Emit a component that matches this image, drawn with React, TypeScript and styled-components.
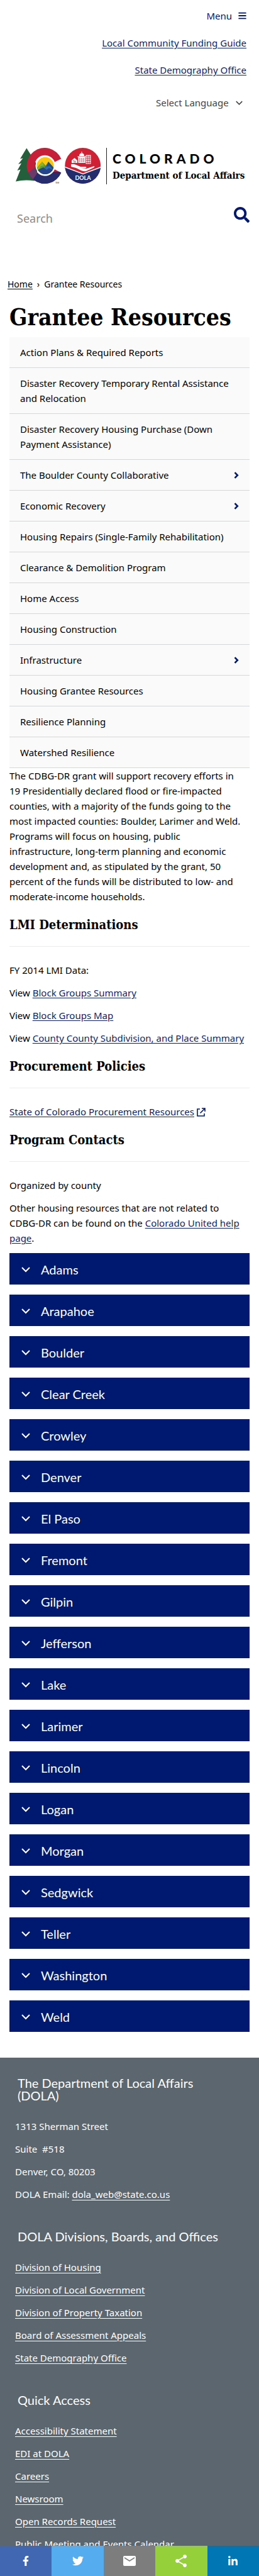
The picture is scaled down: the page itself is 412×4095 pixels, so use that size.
import React from 'react';
import styled, { createGlobalStyle } from 'styled-components';
import { FaBars, FaSearch, FaFacebookF, FaTwitter, FaLinkedinIn } from 'react-icons/fa';
import { MdEmail, MdShare } from 'react-icons/md';

const navy = '#001970';
const bodyFont = '"Trebuchet MS", "Noto Sans", sans-serif';
const slabFont = '"Museo Slab", "DejaVu Serif Condensed", "DejaVu Serif", serif';
const museoFont = '"Museo Sans", Lato, sans-serif';

const GlobalStyle = createGlobalStyle`
  *, *::before, *::after { box-sizing: border-box; }
  body {
    margin: 0;
    background: #fff;
    color: #000;
    font: 400 15px/24px ${bodyFont};
  }
`;

const Header = styled.header`
  display: flex;
  flex-direction: column;
`;

const Utility = styled.div`
  display: flex;
  flex-direction: column;
  align-items: flex-end;
  gap: 19px;
  padding: 13px 20px 0;
`;

const MenuButton = styled.button`
  display: flex;
  align-items: center;
  gap: 10px;
  padding: 0;
  border: 0;
  background: none;
  color: ${navy};
  font: inherit;
  svg { width: 13px; height: 14px; }
`;

const TextLink = styled.a`
  color: #0f1f6b;
  text-decoration: underline;
  text-underline-offset: 2px;
`;

const LanguagePicker = styled.label`
  display: grid;
  align-items: center;
  margin-top: 9px;
  color: #444;
  > * { grid-area: 1 / 1; }
  > svg { justify-self: end; margin-right: 6px; pointer-events: none; }
`;

const Select = styled.select`
  appearance: none;
  height: 24px;
  padding: 0 28px 0 0;
  border: 0;
  background: transparent;
  color: inherit;
  font: inherit;
`;

const Brand = styled.a`
  display: flex;
  align-items: center;
  gap: 9px;
  margin: 60px 0 0 25px;
  color: #000;
  text-decoration: none;
`;

const BrandText = styled.span`
  display: flex;
  flex-direction: column;
  gap: 4px;
  padding-left: 9px;
  border-left: 1px solid #222;
  white-space: nowrap;
`;

const StateName = styled.span`
  padding-top: 4px;
  font: 900 21px/26px ${museoFont};
  letter-spacing: 6px;
`;

const AgencyName = styled.span`
  padding-bottom: 4px;
  font: 700 15px/20px ${slabFont};
`;

const SearchForm = styled.form`
  display: flex;
  justify-content: space-between;
  align-items: center;
  padding: 34px 15px 0 27px;
`;

const SearchInput = styled.input`
  flex: 1;
  min-width: 0;
  height: 40px;
  padding: 0;
  border: 0;
  background: transparent;
  font: 400 18px/24px ${bodyFont};
  &::placeholder { color: #8c8c8c; opacity: 1; }
`;

const IconButton = styled.button`
  display: flex;
  padding: 0 0 12px;
  border: 0;
  background: none;
  color: ${navy};
`;

const Breadcrumb = styled.nav`
  display: flex;
  gap: 7px;
  padding: 73px 12px 0;
  font-size: 14px;
  a { color: #000; text-underline-offset: 2px; }
`;

const Main = styled.main`
  padding: 0 15px;
`;

const PageTitle = styled.h1`
  margin: 16px 0 8px;
  font: 700 37px/48px ${slabFont};
  white-space: nowrap;
`;

const SideNav = styled.nav`
  display: flex;
  flex-direction: column;
  background: #fafafa;
`;

const SideLink = styled.a`
  display: flex;
  justify-content: space-between;
  align-items: center;
  padding: 12px 17px;
  border-bottom: 1px solid #d5d7d9;
  color: #000;
  text-decoration: none;
  svg { flex: none; }
`;

const Paragraph = styled.p<{ $inset?: boolean }>`
  margin: 0 0 12px;
  padding-right: ${p => (p.$inset ? 8 : 0)}px;
`;

const SectionTitle = styled.h2`
  margin: 21px 0 25px;
  padding-bottom: 22px;
  border-bottom: 1px solid #ececec;
  font: 700 20px/24px ${slabFont};
`;

const ExternalIcon = styled.svg`
  margin-left: 4px;
  vertical-align: -2px;
`;

const Accordion = styled.div`
  display: flex;
  flex-direction: column;
  gap: 16px;
  padding-bottom: 41px;
`;

const AccordionButton = styled.button`
  display: flex;
  align-items: center;
  gap: 17px;
  height: 50px;
  padding: 2px 19px 0;
  border: 0;
  background: ${navy};
  color: #fff;
  font: 400 20px/24px ${museoFont};
`;

const Footer = styled.footer`
  display: flex;
  flex-direction: column;
  gap: 45px;
  padding: 30px 24px 39px;
  background: #5c666f;
  color: #fff;
`;

const FooterTitle = styled.h2`
  margin: 0 16px 27px 4px;
  font: 400 20px/20px ${museoFont};
`;

const FooterList = styled.div`
  display: flex;
  flex-direction: column;
  align-items: flex-start;
  gap: 12px;
  a { color: #fff; text-underline-offset: 3px; }
`;

const ShareBar = styled.div`
  position: fixed;
  inset: auto 0 0;
  display: flex;
  height: 48px;
`;

const ShareLink = styled.a<{ $color: string }>`
  flex: 1;
  display: flex;
  justify-content: center;
  align-items: center;
  background: ${p => p.$color};
  color: #fff;
`;

function Logo() {
  return (
    <svg width="135" height="58" viewBox="0 0 135 58" aria-hidden="true">
      <defs>
        <clipPath id="c-shape">
          <path d="M72.3 17.5A28.5 28.5 0 1 0 72.3 39.5L62 34.2A16.5 16.5 0 1 1 62 22.4Z" />
        </clipPath>
        <clipPath id="valley"><circle cx="47" cy="28.3" r="13.6" /></clipPath>
        <clipPath id="seal"><circle cx="106.7" cy="28.5" r="28.4" /></clipPath>
      </defs>
      <path d="M17.3.5 7 17.5l4.5-1L4 26l5-1.5L2.5 36l5-1.5L0 53.5q14-3.5 30-1L36 30Z" fill="#235f3a" />
      <g clipPath="url(#c-shape)">
        <rect x="14" width="62" height="58" fill="#c61f3a" />
        <path d="M14 45 34 29l10 9h32v20H14Z" fill="#262d6e" />
        <path d="M12 46 33 29l4 7-12 18Z" fill="#6c3a68" />
      </g>
      <circle cx="47" cy="28.3" r="15.5" fill="#fff" />
      <g clipPath="url(#valley)">
        <rect x="33" y="14" width="28" height="29" fill="#fdc60b" />
        <path d="M32 34 42 22l9 10-8 12H32Z" fill="#5f9a32" />
        <path d="m42 22 3 6-5 1-4 7-4 0Z" fill="#8db52c" />
        <path d="m42 37 10-15 11 12v10H40Z" fill="#2a6db0" />
        <path d="m52 22-3 8 5-1 5 6 4 0Z" fill="#1e4f88" />
        <path d="m33 36 11-5 5 4 4-3 10 5v8H33Z" fill="#24448c" />
      </g>
      <text x="63" y="57" fontFamily="Lato, sans-serif" fontSize="4" fill="#222">TM</text>
      <g clipPath="url(#seal)">
        <rect x="78" width="58" height="58" fill="#cf2034" />
        <path d="m78 30.5 29 11 29-11V58H78Z" fill="#232c6c" />
        <path d="m78 30.5 29 11 29-11" fill="none" stroke="#fff" strokeWidth="1.6" />
      </g>
      <g fill="#fff">
        <path d="M88 26q4-1 8 1l7 3h8q3 1 0 2.5l-7 .5 8 .2 12-4q3-.2 0 2.3l-12 5.5q-3 1-8-1l-8-4-8-2Z" />
        <path d="m89 20 4.5-4 4.5 4v4h-9ZM99.5 24v-9h11v9ZM98.500 13.5h13v1.5h-13ZM101 13q0-4.5 4-4.5t4 4.5ZM104.5 6h1v3h-1Z" />
        <path d="M111.5 11.5h8v14h-8Z" />
      </g>
      <path d="M91.5 20.5h1.5v3M95 20.5v3M102 16v7M105 16v7M108 16v7M114 12v13M117 12v13M112 14.5h7M112 17.5h7M112 20.5h7M112 23.5h7" stroke="#cf2034" strokeWidth=".9" fill="none" />
      <text x="107" y="51" textAnchor="middle" fontFamily="Lato, sans-serif" fontWeight="700" fontSize="9" fill="#fff">DOLA</text>
    </svg>
  );
}

function Chevron({ width, stroke }: { width: number; stroke: number }) {
  return (
    <svg width={width} height={width} viewBox="0 0 14 14" fill="none" stroke="currentColor" strokeWidth={stroke} aria-hidden="true">
      <path d="m1 4 6 6 6-6" />
    </svg>
  );
}

const pages: { label: string; more?: boolean }[] = [
  { label: 'Action Plans & Required Reports' },
  { label: 'Disaster Recovery Temporary Rental Assistance and Relocation' },
  { label: 'Disaster Recovery Housing Purchase (Down Payment Assistance)' },
  { label: 'The Boulder County Collaborative', more: true },
  { label: 'Economic Recovery', more: true },
  { label: 'Housing Repairs (Single-Family Rehabilitation)' },
  { label: 'Clearance & Demolition Program' },
  { label: 'Home Access' },
  { label: 'Housing Construction' },
  { label: 'Infrastructure', more: true },
  { label: 'Housing Grantee Resources' },
  { label: 'Resilience Planning' },
  { label: 'Watershed Resilience' },
];

const counties = [
  'Adams', 'Arapahoe', 'Boulder', 'Clear Creek', 'Crowley', 'Denver', 'El Paso', 'Fremont', 'Gilpin', 'Jefferson',
  'Lake', 'Larimer', 'Lincoln', 'Logan', 'Morgan', 'Sedgwick', 'Teller', 'Washington', 'Weld',
];

const divisions = [
  'Division of Housing', 'Division of Local Government', 'Division of Property Taxation',
  'Board of Assessment Appeals', 'State Demography Office',
];

const quickLinks = [
  'Accessibility Statement', 'EDI at DOLA', 'Careers', 'Newsroom', 'Open Records Request',
  'Public Meeting and Events Calendar',
];

export default function App() {
  return (
    <>
      <GlobalStyle />
      <Header>
        <Utility>
          <MenuButton type="button">Menu <FaBars /></MenuButton>
          <TextLink href="#">Local Community Funding Guide</TextLink>
          <TextLink href="#">State Demography Office</TextLink>
          <LanguagePicker>
            <Select aria-label="Select Language">
              <option>Select Language</option>
            </Select>
            <Chevron width={11} stroke={2} />
          </LanguagePicker>
        </Utility>
        <Brand href="#">
          <Logo />
          <BrandText>
            <StateName>COLORADO</StateName>
            <AgencyName>Department of Local Affairs</AgencyName>
          </BrandText>
        </Brand>
        <SearchForm role="search">
          <SearchInput type="search" placeholder="Search" aria-label="Search" />
          <IconButton type="submit" aria-label="Search"><FaSearch size={25} /></IconButton>
        </SearchForm>
      </Header>
      <Breadcrumb aria-label="Breadcrumb">
        <a href="#">Home</a><span>›</span><span>Grantee Resources</span>
      </Breadcrumb>
      <Main>
        <PageTitle>Grantee Resources</PageTitle>
        <SideNav aria-label="Grantee Resources">
          {pages.map(page => (
            <SideLink key={page.label} href="#">
              {page.label}
              {page.more && (
                <svg width="8" height="11" viewBox="0 0 8 11" fill="none" stroke={navy} strokeWidth="2.6" aria-hidden="true">
                  <path d="m1.5 1.2 4.3 4.3-4.3 4.3" />
                </svg>
              )}
            </SideLink>
          ))}
        </SideNav>
        <Paragraph $inset>
          The CDBG-DR grant will support recovery efforts in 19 Presidentially declared flood or fire-impacted
          counties, with a majority of the funds going to the most impacted counties: Boulder, Larimer and Weld.
          Programs will focus on housing, public infrastructure, long-term planning and economic development and,
          as stipulated by the grant, 50 percent of the funds will be distributed to low- and moderate-income
          households.
        </Paragraph>
        <SectionTitle>LMI Determinations</SectionTitle>
        <Paragraph>FY 2014 LMI Data:</Paragraph>
        <Paragraph>View <TextLink href="#">Block Groups Summary</TextLink></Paragraph>
        <Paragraph>View <TextLink href="#">Block Groups Map</TextLink></Paragraph>
        <Paragraph>View <TextLink href="#">County County Subdivision, and Place Summary</TextLink></Paragraph>
        <SectionTitle>Procurement Policies</SectionTitle>
        <Paragraph>
          <TextLink href="#">State of Colorado Procurement Resources</TextLink>
          <ExternalIcon width="14" height="14" viewBox="0 0 14 14" fill="none" stroke={navy} strokeWidth="1.6" aria-hidden="true">
            <path d="M5 2H1v11h11V9M8 1h5v5M13 1 5.5 8.5" />
          </ExternalIcon>
        </Paragraph>
        <SectionTitle>Program Contacts</SectionTitle>
        <Paragraph>Organized by county</Paragraph>
        <Paragraph>
          Other housing resources that are not related to CDBG-DR can be found on the{' '}
          <TextLink href="#">Colorado United help page</TextLink>.
        </Paragraph>
        <Accordion>
          {counties.map(county => (
            <AccordionButton key={county} type="button" aria-expanded="false">
              <Chevron width={14} stroke={2} />
              {county}
            </AccordionButton>
          ))}
        </Accordion>
      </Main>
      <Footer>
        <section>
          <FooterTitle>The Department of Local Affairs (DOLA)</FooterTitle>
          <FooterList>
            <span>1313 Sherman Street</span>
            <span>Suite&nbsp; #518</span>
            <span>Denver, CO, 80203</span>
            <span>DOLA Email: <a href="#">dola_web@state.co.us</a></span>
          </FooterList>
        </section>
        <section>
          <FooterTitle>DOLA Divisions, Boards, and Offices</FooterTitle>
          <FooterList>{divisions.map(d => <a key={d} href="#">{d}</a>)}</FooterList>
        </section>
        <section>
          <FooterTitle>Quick Access</FooterTitle>
          <FooterList>{quickLinks.map(q => <a key={q} href="#">{q}</a>)}</FooterList>
        </section>
      </Footer>
      <ShareBar>
        <ShareLink href="#" $color="#4267b2" aria-label="Share on Facebook"><FaFacebookF size={16} /></ShareLink>
        <ShareLink href="#" $color="#55acee" aria-label="Share on Twitter"><FaTwitter size={18} /></ShareLink>
        <ShareLink href="#" $color="#7d7d7d" aria-label="Share by email"><MdEmail size={24} /></ShareLink>
        <ShareLink href="#" $color="#95d03a" aria-label="Share"><MdShare size={24} /></ShareLink>
        <ShareLink href="#" $color="#0077b5" aria-label="Share on LinkedIn"><FaLinkedinIn size={17} /></ShareLink>
      </ShareBar>
    </>
  );
}
